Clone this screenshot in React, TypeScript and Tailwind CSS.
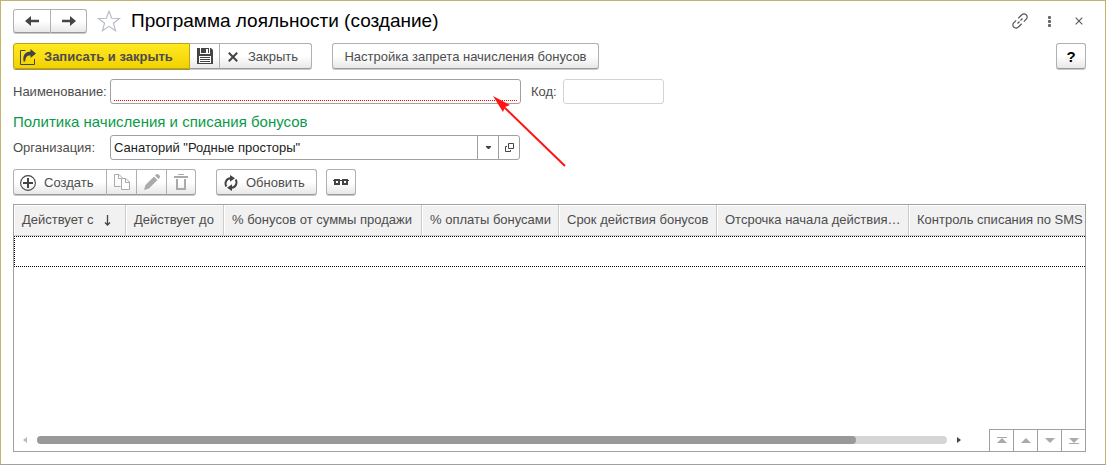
import type { ReactNode } from "react";

const raised =
  "flex items-center border border-[#b0b0b0] border-b-[#999] bg-linear-to-b from-white from-50% to-[#e8e8e8] shadow-[0_1px_0_#c9c9c9]";

function Group({ children }: { children: ReactNode }) {
  return <div className="flex">{children}</div>;
}

function ArrowIcon({ flip = false }: { flip?: boolean }) {
  return (
    <svg width="14" height="10" viewBox="0 0 14 10" className={flip ? "rotate-180" : ""} aria-hidden="true">
      <path d="M6 0 0 5l6 5V6.200H14V3.800H6z" fill="#444" />
    </svg>
  );
}

function StarIcon() {
  return (
    <svg width="24" height="22" viewBox="0 0 24 22" fill="none" aria-hidden="true">
      <path
        d="M12 1.200l2.700 7.100 7.800.2-6.100 4.700 2.200 7.600L12 16.400l-6.600 4.400 2.200-7.600L1.500 8.500l7.800-.2z"
        stroke="#b4bac2"
        strokeWidth="1.100"
      />
    </svg>
  );
}

function SaveCloseIcon() {
  return (
    <svg width="16" height="16" viewBox="0 0 16 16" aria-hidden="true">
      <path d="M5.500 1.500H.5v14h14V10" fill="none" stroke="#444" />
      <path d="M10.500 0 16 4.500 10.500 9V6.500C7 6.400 5.600 8 5.200 12.500H3.500C2.500 6 5.500 2.600 10.500 2.600z" fill="#444" />
    </svg>
  );
}

function DiskIcon() {
  return (
    <svg width="16" height="16" viewBox="0 0 16 16" aria-hidden="true">
      <path d="M0 0h3v6h10V0h1l2 2v14H0z" fill="#444" />
      <path d="M4 0h8v5H4z" fill="#444" />
      <path d="M9 1h2v4H9zM2 8h12v7H2z" fill="#fff" />
      <path d="M3 9.500h10M3 11.500h10M3 13.500h10" stroke="#444" />
    </svg>
  );
}

function CrossIcon() {
  return (
    <svg width="10" height="10" viewBox="0 0 10 10" aria-hidden="true">
      <path d="M.8.8l8.400 8.400M9.200.8.8 9.200" stroke="#444" strokeWidth="2" />
    </svg>
  );
}

function LinkIcon() {
  return (
    <svg width="16" height="16" viewBox="0 0 16 16" fill="none" stroke="#555" strokeWidth="1.200" aria-hidden="true">
      <path d="M6.300 5.200 9.800 1.800a3 3 0 0 1 4.400 0 3 3 0 0 1 0 4.400L11.800 8.600" />
      <path d="M9.700 10.800 6.200 14.200a3 3 0 0 1-4.400 0 3 3 0 0 1 0-4.400L4.200 7.400" />
      <path d="M5.500 10.500l2-2M8.500 7.500l2-2" />
    </svg>
  );
}

function DotsIcon() {
  return (
    <svg width="3" height="11" viewBox="0 0 3 11" fill="#666" aria-hidden="true">
      <rect width="3" height="3" rx="1" />
      <rect y="4" width="3" height="3" rx="1" />
      <rect y="8" width="3" height="3" rx="1" />
    </svg>
  );
}

function ThinCrossIcon() {
  return (
    <svg width="8" height="8" viewBox="0 0 8 8" aria-hidden="true">
      <path d="M.7.7l6.600 6.600M7.300.7.7 7.300" stroke="#555" strokeWidth="1.100" />
    </svg>
  );
}

function PlusIcon() {
  return (
    <svg width="16" height="16" viewBox="0 0 16 16" aria-hidden="true">
      <circle cx="8" cy="8" r="7.400" fill="none" stroke="#444" strokeWidth="1.100" />
      <path d="M8 3v10M3 8h10" stroke="#444" strokeWidth="2" />
    </svg>
  );
}

function CopyIcon() {
  return (
    <svg width="16" height="16" viewBox="0 0 16 16" fill="none" stroke="#aaa" aria-hidden="true">
      <path d="M6.500 12.500h-6V.5H5L8.500 4" />
      <path d="M4.500.5V4.500H7" />
      <path d="M7.500 4.500h4.500l3.500 3.500v7.500h-8z" fill="#fff" />
      <path d="M11.500 4.500v4h4" />
    </svg>
  );
}

function PencilIcon() {
  return (
    <svg width="16" height="16" viewBox="0 0 16 16" fill="#aaa" aria-hidden="true">
      <path d="M0 16l1.500-5L10 2.500l3.500 3.500L5 14.500z" />
      <path d="M11 1.500 12 .6a2 2 0 0 1 2.700 0l.7.7a2 2 0 0 1 0 2.700l-.9 1z" />
    </svg>
  );
}

function TrashIcon() {
  return (
    <svg width="14" height="16" viewBox="0 0 14 16" aria-hidden="true">
      <path d="M0 2h14v2H0zM4 0h6v1H4z" fill="#aaa" />
      <path d="M3 5v10h8V5" fill="none" stroke="#aaa" strokeWidth="2" />
    </svg>
  );
}

function RefreshIcon() {
  return (
    <svg width="14" height="16" viewBox="0 0 14 16" aria-hidden="true">
      <path d="M2.300 11.500C.5 8 2 3.700 6.500 3.300" fill="none" stroke="#444" strokeWidth="2" />
      <path d="M6 0l5 3.200L6 6.800z" fill="#444" />
      <path d="M11.700 4.500C13.500 8 12 12.300 7.500 12.700" fill="none" stroke="#444" strokeWidth="2" />
      <path d="M8 16l-5-3.200L8 9.200z" fill="#444" />
    </svg>
  );
}

function GlassesIcon() {
  return (
    <svg width="16" height="6" viewBox="0 0 16 6" fill="none" stroke="#444" aria-hidden="true">
      <path d="M0 1.500h2M6 1.500h4M14 1.500h2" />
      <rect x="2" y="1" width="4" height="4" strokeWidth="2" />
      <rect x="10" y="1" width="4" height="4" strokeWidth="2" />
    </svg>
  );
}

function OpenIcon() {
  return (
    <svg width="9" height="9" viewBox="0 0 9 9" fill="none" stroke="#444" aria-hidden="true">
      <path d="M3.500.5h5v5h-5z" />
      <path d="M2 3.500H.5v5h5V7" />
    </svg>
  );
}

function Triangle({ down = false, bar = false }: { down?: boolean; bar?: boolean }) {
  return (
    <svg width="10" height="7" viewBox="0 0 10 7" fill="#aaa" className={down ? "rotate-180" : ""} aria-hidden="true">
      {bar && <path d="M0 0h10v1H0z" />}
      <path d="M5 1l5 5H0z" />
    </svg>
  );
}

const columns = [
  { title: "Действует с", width: "w-[112px]", sorted: true },
  { title: "Действует до", width: "w-[98px]" },
  { title: "% бонусов от суммы продажи", width: "w-[198px]" },
  { title: "% оплаты бонусами", width: "w-[137px]" },
  { title: "Срок действия бонусов", width: "w-[158px]" },
  { title: "Отсрочка начала действия…", width: "w-[192px]" },
  { title: "Контроль списания по SMS", width: "" },
];

const pager = [
  { label: "В начало", down: false, bar: true },
  { label: "Вверх", down: false, bar: false },
  { label: "Вниз", down: true, bar: false },
  { label: "В конец", down: true, bar: true },
];

export default function App() {
  return (
    <main className="flex min-h-screen flex-col border border-[#c3b368] border-b-[#a0a0a0] bg-white pt-2 pr-[19px] pb-3 pl-3 font-['Liberation_Sans',Arial,sans-serif] text-[13px] leading-4 text-[#4d4d4d]">
      <header className="flex h-6 items-center">
        <Group>
          <button aria-label="Назад" className={`${raised} h-6 w-[38px] justify-center rounded-l-[3px]`}>
            <ArrowIcon />
          </button>
          <button aria-label="Вперёд" className={`${raised} h-6 w-9 justify-center rounded-r-[3px] border-l-0`}>
            <ArrowIcon flip />
          </button>
        </Group>
        <button aria-label="В избранное" className="ml-2.5">
          <StarIcon />
        </button>
        <h1 className="ml-2.5 text-[19px] leading-6 text-black">Программа лояльности (создание)</h1>
        <div className="ml-auto flex items-center pr-[3px]">
          <button aria-label="Ссылка">
            <LinkIcon />
          </button>
          <button aria-label="Ещё" className="ml-5">
            <DotsIcon />
          </button>
          <button aria-label="Закрыть окно" className="ml-6">
            <ThinCrossIcon />
          </button>
        </div>
      </header>

      <div className="mt-2.5 flex">
        <Group>
          <button className="flex h-[26px] w-[177px] items-center gap-2 rounded-l-[3px] border border-[#b9a21c] bg-linear-to-b from-[#ffe91f] to-[#f2d200] pt-px pl-1.5 font-bold shadow-[0_1px_0_#a59430]">
            <SaveCloseIcon />
            Записать и закрыть
          </button>
          <button aria-label="Записать" className={`${raised} h-[26px] w-[30px] justify-center border-l-0`}>
            <DiskIcon />
          </button>
          <button className={`${raised} h-[26px] w-[92px] gap-2.5 rounded-r-[3px] border-l-0 pt-px pl-2`}>
            <CrossIcon />
            Закрыть
          </button>
        </Group>
        <button className={`${raised} ml-5 h-[26px] w-[267px] justify-center rounded-[3px] pt-px`}>
          Настройка запрета начисления бонусов
        </button>
        <button
          className={`${raised} ml-auto h-[26px] w-[30px] justify-center rounded-[3px] pt-px text-[15px] font-bold text-black`}
        >
          ?
        </button>
      </div>

      <div className="mt-2.5 flex items-center">
        <label htmlFor="name" className="w-[97px]">
          Наименование:
        </label>
        <div className="relative h-[25px] w-[411px] rounded-[3px] border border-[#a0a0a0] px-[3px] pb-0.5">
          <input
            id="name"
            type="text"
            className="block h-full w-full border-b border-dotted border-[#f00] text-[#222] outline-none"
          />
          <svg
            width="74"
            height="72"
            viewBox="0 0 74 72"
            fill="#ff1414"
            className="pointer-events-none absolute top-4 -right-[47px]"
            aria-hidden="true"
          >
            <path d="M10 10l62 60" stroke="#ff1414" strokeWidth="2" />
            <path d="M0 0l17 9-5 2-2 5z" />
          </svg>
        </div>
        <label htmlFor="code" className="ml-2.5 w-8">
          Код:
        </label>
        <input
          id="code"
          type="text"
          className="h-[25px] w-[101px] rounded-[3px] border border-[#d3d3d3] px-1 outline-none"
        />
      </div>

      <h2 className="mt-2 text-[15px] leading-5 text-[#0b9a4a]">Политика начисления и списания бонусов</h2>

      <div className="mt-[3px] flex items-center">
        <label htmlFor="org" className="w-[97px]">
          Организация:
        </label>
        <div className="flex h-[25px] w-[410px] rounded-[3px] border border-[#a0a0a0]">
          <div className="grid flex-1">
            <select
              id="org"
              className="col-start-1 row-start-1 w-full appearance-none bg-transparent px-[3px] text-[#222] outline-none"
            >
              <option>Санаторий "Родные просторы"</option>
            </select>
            <span className="pointer-events-none col-start-1 row-start-1 flex w-[21px] items-center justify-center justify-self-end border-l border-[#a0a0a0]">
              <svg width="5" height="3" viewBox="0 0 5 3" aria-hidden="true">
                <path d="M0 0h5v1L3 3H2L0 1z" fill="#444" />
              </svg>
            </span>
          </div>
          <button aria-label="Открыть" className="flex w-[21px] items-center justify-center border-l border-[#a0a0a0]">
            <OpenIcon />
          </button>
        </div>
      </div>

      <div className="mt-[9px] flex">
        <Group>
          <button className={`${raised} h-[26px] w-[94px] gap-2 rounded-l-[3px] pt-px pl-1.5`}>
            <PlusIcon />
            Создать
          </button>
          <button disabled aria-label="Скопировать" className={`${raised} h-[26px] w-[30px] justify-center border-l-0`}>
            <CopyIcon />
          </button>
          <button disabled aria-label="Изменить" className={`${raised} h-[26px] w-[30px] justify-center border-l-0`}>
            <PencilIcon />
          </button>
          <button
            disabled
            aria-label="Удалить"
            className={`${raised} h-[26px] w-[29px] justify-center rounded-r-[3px] border-l-0`}
          >
            <TrashIcon />
          </button>
        </Group>
        <button className={`${raised} ml-5 h-[26px] w-[101px] gap-2 rounded-[3px] pt-px pl-[7px]`}>
          <RefreshIcon />
          Обновить
        </button>
        <button
          aria-label="Просмотр"
          className={`${raised} ml-[9px] h-[26px] w-[30px] justify-center rounded-[3px]`}
        >
          <GlassesIcon />
        </button>
      </div>

      <section className="mt-[9px] flex flex-1 flex-col overflow-hidden border border-[#a0a0a0]">
        <table className="w-full table-fixed border-separate border-spacing-0">
          <thead>
            <tr>
              {columns.map((c, i) => (
                <th
                  key={c.title}
                  className={`${c.width} h-[31px] overflow-hidden border-b border-[#ccc] bg-[#f1f1f1] pl-2 text-left font-normal whitespace-nowrap shadow-[inset_1px_1px_0_#fff] ${
                    i < columns.length - 1 ? "border-r" : ""
                  }`}
                >
                  <span className="flex items-center">
                    {c.title}
                    {c.sorted && (
                      <svg width="7" height="11" viewBox="0 0 7 11" className="ml-2.5" aria-hidden="true">
                        <path d="M3.500 0v10M1 7.500l2.500 2.500L6 7.500" fill="none" stroke="#444" strokeWidth="1.300" />
                      </svg>
                    )}
                  </span>
                </th>
              ))}
            </tr>
          </thead>
          <tbody>
            <tr>
              <td colSpan={7} className="h-[31px] border-y border-l border-dotted border-black" />
            </tr>
          </tbody>
        </table>
        <div className="mt-auto flex items-end">
          <div className="flex h-[22px] flex-1 items-center pr-7 pl-[9px]">
            <svg width="4" height="6" viewBox="0 0 4 6" aria-hidden="true">
              <path d="M4 0v6L0 3z" fill="#bbb" />
            </svg>
            <div className="mx-2.5 h-2 flex-1 rounded-full bg-[#d5d5d5]">
              <div className="h-2 w-[90%] rounded-full bg-[#999]" />
            </div>
            <svg width="4" height="6" viewBox="0 0 4 6" aria-hidden="true">
              <path d="M0 0v6l4-3z" fill="#444" />
            </svg>
          </div>
          <div className="flex border-t border-[#a0a0a0]">
            {pager.map((p) => (
              <button
                key={p.label}
                aria-label={p.label}
                className="flex h-[21px] w-6 items-center justify-center border-l border-[#a0a0a0]"
              >
                <Triangle down={p.down} bar={p.bar} />
              </button>
            ))}
          </div>
        </div>
      </section>
    </main>
  );
}
